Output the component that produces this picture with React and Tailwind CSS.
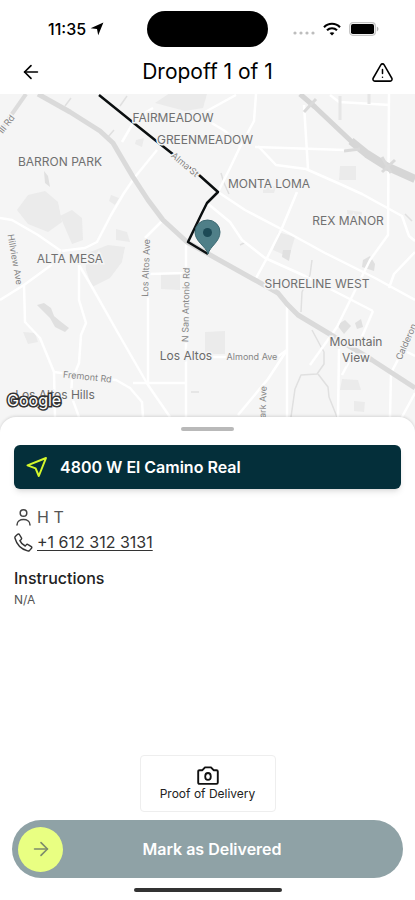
// App.jsx
// Driver dropoff screen: map on top, stop details in the bottom sheet.

import React, { useState } from "react";
import { ArrowLeft, ArrowRight, TriangleAlert } from "lucide-react";

const PARKS = [
  "M17 210 L28 195 L45 191 L58 202 L62 222 L48 232 L28 224Z",
  "M60 216 L72 210 L82 218 L83 240 L72 244Z",
  "M85 254 L108 245 L125 247 L122 262 L110 278 L92 287 L86 270Z",
  "M116 229 L127 232 L130 242 L116 240Z",
  "M136 140 L144 138 L142 147 L135 144Z",
  "M111 195 L119 198 L115 205 L109 201Z",
  "M155 103 L170 93 L207 94 L203 108 L185 111Z",
  "M340 166 L356 166 L356 180 L339 180Z",
  "M278 232 L295 237 L289 257 L273 250Z",
  "M347 210 L362 212 L361 222 L348 222Z",
  "M205 332 L225 331 L225 354 L205 354Z",
  "M161 274 L180 274 L180 290 L161 289Z",
  "M342 379 L358 380 L361 390 L340 390Z",
  "M354 401 L365 402 L364 412 L354 411Z",
  "M23 332 L35 333 L38 342 L28 344Z",
  "M263 186 L276 186 L274 193 L263 193Z",
];

const DARK_PARKS = [
  "M37 305 L44 303 L51 308 L54 316 L60 321 L69 328 L65 332 L55 327 L50 318Z",
  "M44 171 L48 176 L50 187 L45 183Z",
  "M337 325 L345 320 L351 326 L344 334Z",
  "M355 323 L361 319 L363 327 L357 329Z",
  "M363 260 L370 256 L375 264 L374 271 L362 267Z",
  "M283 250 L291 250 L289 261 L282 257Z",
];

const ROADS = [
  "M0 218 L12 220 L38 235 L61 251 L50 266 L24 285 L0 300",
  "M61 251 L85 248 L97 242 L111 215 L124 193 L135 177 L157 150",
  "M122 142 L136 118 L153 108",
  "M145 238 L163 220",
  "M79 265 L92 287 L118 333 L148 385 L170 417",
  "M24 285 L25 322 L40 338 L54 372 L55 417",
  "M79 265 L79 300 L86 323 L81 335 L79 363 L72 380 L71 395 L79 417",
  "M54 372 L90 377 L116 380 L130 388 L142 402 L143 417",
  "M148 275 L148 385",
  "M148 274 L186 273 M133 383 L185 383",
  "M186 243 L186 417",
  "M205 357 L277 357 L287 350",
  "M287 304 L287 417",
  "M287 350 L268 379 L238 415",
  "M339 349 L338 417",
  "M391 373 L390 417",
  "M218 192 L245 210 L285 231 L325 253 L375 278 L415 300",
  "M207 203 L230 222 L242 240 L265 258 L305 276 L373 311",
  "M218 192 L230 168 L240 147 L254 121 L256 94",
  "M240 146 L225 131 L205 119 M205 112 L236 95",
  "M258 146 L276 165 L306 169 L340 184 L362 194 L402 216 L409 236 L415 241",
  "M255 147 L345 150 M330 95 L339 102 L390 105",
  "M304 105 L308 169",
  "M389 94 L388 235 L370 260 L337 327 L310 365",
  "M373 311 L361 339 L342 375",
  "M297 192 L282 228 L267 258 L255 280",
  "M415 252 L394 274 L389 288",
  "M415 356 L403 350 L391 373",
  "M402 417 L415 393",
];

const MINOR_ROADS = [
  "M312 260 L310 275 L302 292 L301 312",
  "M312 330 L320 345 L324 352 L324 364 L317 374 L301 375 L295 389 L291 417",
  "M318 374 L328 387 L329 397 L337 417",
  "M120 106 L127 96 M65 106 L71 98 M108 137 L114 130",
  "M221 173 L224 183 L229 194",
  "M240 245 L246 242",
  "M405 214 L412 221",
  "M191 392 L199 392",
];

const AREAS = [
  { name: "FAIRMEADOW", x: 173, y: 122 },
  { name: "GREENMEADOW", x: 205, y: 144 },
  { name: "BARRON PARK", x: 60, y: 166 },
  { name: "MONTA LOMA", x: 269, y: 188 },
  { name: "REX MANOR", x: 348, y: 225 },
  { name: "ALTA MESA", x: 70, y: 263 },
  { name: "SHORELINE WEST", x: 317, y: 288 },
];

const STREETS = [
  { name: "Hillview Ave", x: 12, y: 260, angle: 80 },
  { name: "Los Altos Ave", x: 149, y: 268, angle: -88 },
  { name: "N San Antonio Rd", x: 189, y: 305, angle: -89 },
  { name: "Alma St", x: 183, y: 167, angle: 40 },
  { name: "Fremont Rd", x: 87, y: 380, angle: 6 },
  { name: "Almond Ave", x: 252, y: 360, angle: 0 },
  { name: "Park Ave", x: 266, y: 405, angle: -88 },
  { name: "Calderon", x: 409, y: 343, angle: -66 },
  { name: "ill Rd", x: 9, y: 126, angle: -52 },
];

const StatusBar = () => (
  <div className="flex h-[58px] items-center px-9">
    <div className="flex flex-1 items-center gap-1">
      <span className="ml-3 text-base font-medium">11:35</span>
      <svg className="h-3.5 w-3.5" viewBox="0 0 14 14" fill="currentColor">
        <path d="M13.4 0.6 L8.2 13.2 L7 7 L0.6 6.2Z" />
      </svg>
    </div>
    <div className="h-9 w-[121px] rounded-full bg-black" />
    <div className="flex flex-1 items-center justify-end gap-2">
      <svg className="mt-2 h-1 w-[22px]" viewBox="0 0 22 4" fill="#bdbdbd">
        <circle cx="2" cy="2" r="1.6" />
        <circle cx="8" cy="2" r="1.6" />
        <circle cx="14" cy="2" r="1.6" />
        <circle cx="20" cy="2" r="1.6" />
      </svg>
      <svg className="h-3.5 w-[18px]" viewBox="0 0 18 14" fill="none">
        <path
          d="M1 5.2 C5.4 0.6 12.6 0.6 17 5.2 M4 8.3 C6.8 5.5 11.2 5.5 14 8.3"
          stroke="#000"
          strokeWidth="2.1"
        />
        <path d="M9 13.6 L6.6 11.1 C7.9 9.8 10.1 9.8 11.4 11.1Z" fill="#000" />
      </svg>
      <svg className="h-3.5 w-[30px]" viewBox="0 0 30 14" fill="none">
        <rect x="0.7" y="0.7" width="25.6" height="12.6" rx="3.2" stroke="#c4c4c4" strokeWidth="1.3" />
        <rect x="2" y="2" width="23" height="10" rx="1.8" fill="#000" />
        <path d="M27.8 4.6 C30 5.4 30 8.6 27.8 9.4Z" fill="#b5b5b5" />
      </svg>
    </div>
  </div>
);

const DropoffMap = () => (
  <svg
    className="h-[336px] w-full bg-[#f5f5f5]"
    viewBox="0 94 415 336"
    preserveAspectRatio="xMidYMin slice"
    fontFamily="Inter, sans-serif"
    role="img"
    aria-label="Map"
  >
    {PARKS.map((d) => (
      <path key={d} d={d} fill="#ebebeb" />
    ))}
    {DARK_PARKS.map((d) => (
      <path key={d} d={d} fill="#e0e0e0" />
    ))}

    <g fill="none" strokeLinejoin="round">
      {MINOR_ROADS.map((d) => (
        <path key={d} d={d} stroke="#e0e0e0" strokeWidth="1.5" />
      ))}
      {ROADS.map((d) => (
        <path key={d} d={d} stroke="#fff" strokeWidth="2.5" />
      ))}

      {/* El Camino Real and Page Mill */}
      <path
        d="M38 94 L70 112 L100 131 L113 143 L120 155 L133 177 L148 200 L163 220 L187 242 L212 256 L255 280 L278 293 L287 304 L298 315 L328 333 L372 360 L415 388"
        stroke="#dadada"
        strokeWidth="5"
      />
      <path d="M26 94 L0 131" stroke="#dcdcdc" strokeWidth="4" />

      {/* US-101 */}
      <path d="M300 94 L315 107 L333 124 L352 142" stroke="#d6d6d6" strokeWidth="5" />
      <path d="M351 141 L367 154 L386 166 L415 179" stroke="#d6d6d6" strokeWidth="8" />
      <path
        d="M304 112 L316 99 M344 151 L360 149 M382 172 L395 160 M382 157 L391 173"
        stroke="#dadada"
        strokeWidth="3"
      />
      <path d="M340 96 L340 120 M369 94 L369 104" stroke="#e6e6e6" strokeWidth="3" />
      <path d="M389 94 L389 158" stroke="#fff" strokeWidth="2" />

      {/* Route */}
      <path
        d="M99 95 L130 120 L155 140 L174 155 L199 175 L218 192 L207 203 L202 213 L188 242 L208 254"
        stroke="#0b0f10"
        strokeWidth="2.5"
      />
    </g>

    <g stroke="#f5f5f5" strokeWidth="3" paintOrder="stroke" textAnchor="middle">
      {AREAS.map((area) => (
        <text key={area.name} x={area.x} y={area.y} fontSize="12" fill="#707070">
          {area.name}
        </text>
      ))}
      {STREETS.map((street) => (
        <text
          key={street.name}
          x={street.x}
          y={street.y}
          fontSize="9"
          fill="#858585"
          transform={`rotate(${street.angle} ${street.x} ${street.y})`}
        >
          {street.name}
        </text>
      ))}
      <g fontSize="12" fill="#6b6b6b">
        <text x="186" y="360">Los Altos</text>
        <text x="356" y="346">Mountain</text>
        <text x="356" y="362">View</text>
        <text x="55" y="399">Los Altos Hills</text>
      </g>
    </g>

    <text x="7" y="406" fontSize="16" fill="#fff" stroke="#333" strokeWidth="3" paintOrder="stroke">
      Google
    </text>

    {/* Destination pin */}
    <path
      d="M208 254 C206 246 195 242 195 232 A12.5 12 0 0 1 220 232 C220 242 210 246 208 254Z"
      fill="#4f7f88"
      stroke="#3b6871"
      strokeWidth="1"
    />
    <circle cx="207.5" cy="232.5" r="4.5" fill="#1d4a56" />
  </svg>
);

const App = () => {
  const [delivered, setDelivered] = useState(false);

  return (
    <main className="flex min-h-screen flex-col bg-white font-[Inter,sans-serif] text-black">
      <StatusBar />

      <header className="flex h-9 items-center justify-between px-5 pb-2">
        <button type="button" aria-label="Back" className="w-6">
          <ArrowLeft size={22} strokeWidth={1.8} />
        </button>
        <h1 className="text-[21px] leading-7">Dropoff 1 of 1</h1>
        <button type="button" aria-label="Report a problem" className="w-6">
          <TriangleAlert size={23} strokeWidth={1.6} />
        </button>
      </header>

      <DropoffMap />

      {/* Bottom sheet */}
      <section className="relative -mt-[13px] flex flex-1 flex-col rounded-t-2xl bg-white shadow-[0_-1px_3px_rgba(0,0,0,0.12)]">
        <div className="mx-auto mt-2.5 h-1 w-[53px] rounded-full bg-[#b9b9b9]" />

        <div className="px-3.5 pt-3.5">
          <button
            type="button"
            className="flex h-11 w-full items-center gap-3 rounded-md bg-[#042f3a] px-3 text-left font-semibold text-white shadow-md"
          >
            <svg className="h-[22px] w-[22px]" viewBox="0 0 22 22" fill="none">
              <path
                d="M20 2 L12.8 20 L9.6 12.4 L1.5 9.4Z"
                stroke="#d4f72b"
                strokeWidth="2"
                strokeLinejoin="round"
              />
            </svg>
            <span>4800 W El Camino Real</span>
          </button>

          <div className="mt-4 flex items-center gap-1 text-[#555]">
            <svg className="h-[19px] w-[19px]" viewBox="0 0 19 19" fill="none">
              <circle cx="9.5" cy="5" r="3.3" stroke="#444" strokeWidth="1.5" />
              <path d="M3 17 C3 9.8 16 9.8 16 17" stroke="#444" strokeWidth="1.5" strokeLinecap="round" />
            </svg>
            <span>H T</span>
          </div>
          <div className="mt-px flex items-center gap-1 text-[#333]">
            <svg className="h-[19px] w-[19px]" viewBox="0 0 19 19" fill="none">
              <path
                d="M1.3 3.4 L3.6 1.3 C4.2 0.8 5 0.9 5.4 1.5 L7.4 4.8 C7.8 5.5 7.6 6.2 7 6.7 L5.9 7.6 C6.9 9.9 8.9 11.9 11.2 13 L12.2 11.9 C12.7 11.3 13.5 11.2 14.1 11.6 L17.3 13.6 C17.9 14 18 14.8 17.5 15.3 L15.4 17.6 C14.9 18 14.3 18.1 13.6 17.9 C7.4 16.3 2.8 11.8 1 5.3 C0.8 4.6 0.9 3.9 1.3 3.4Z"
                stroke="currentColor"
                strokeWidth="1.4"
                strokeLinejoin="round"
              />
            </svg>
            <a href="tel:+16123123131" className="underline underline-offset-2">
              +1 612 312 3131
            </a>
          </div>

          <h2 className="mt-3 font-medium text-[#222]">Instructions</h2>
          <p className="text-xs leading-5 text-[#555]">N/A</p>
        </div>

        <div className="mt-auto flex flex-col items-center px-3">
          <button
            type="button"
            className="flex h-[57px] w-[136px] flex-col items-center justify-center rounded border border-[#eee] text-xs text-[#222]"
          >
            <svg className="h-5 w-[22px]" viewBox="0 0 22 20" fill="none">
              <path
                d="M1.2 5.5 Q1.2 4.2 2.5 4.2 H5.4 L8 1.4 H14 L16.6 4.2 H19.5 Q20.8 4.2 20.8 5.5 V16.6 Q20.8 17.9 19.5 17.9 H2.5 Q1.2 17.9 1.2 16.6Z"
                stroke="#111"
                strokeWidth="1.9"
                strokeLinejoin="round"
              />
              <ellipse cx="11" cy="10.4" rx="2.8" ry="3.4" stroke="#111" strokeWidth="1.8" />
            </svg>
            <span>Proof of Delivery</span>
          </button>

          <button
            type="button"
            onClick={() => setDelivered(true)}
            disabled={delivered}
            className="mt-2 flex h-[58px] w-full items-center rounded-full bg-[#8fa2a6] px-1.5 font-semibold text-white"
          >
            <span className="flex h-[45px] w-[45px] items-center justify-center rounded-full bg-[#e9ff82] text-[#7c8b6c]">
              <ArrowRight size={22} strokeWidth={1.8} />
            </span>
            <span className="flex-1 pr-9 text-center">Mark as Delivered</span>
          </button>

          <div className="mt-2.5 mb-2 h-1 w-[148px] rounded-full bg-[#333]" />
        </div>
      </section>
    </main>
  );
};

export default App;
